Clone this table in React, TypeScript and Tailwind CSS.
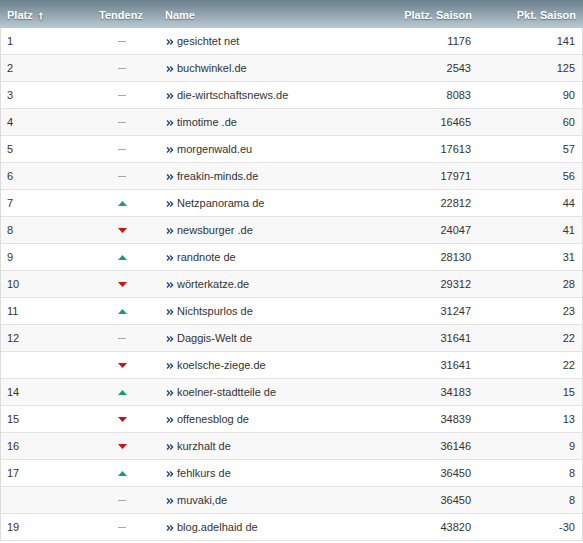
import React from "react";

type Row = {
  platz: string;
  trend: "none" | "up" | "down";
  name: string;
  saison: number;
  punkte: number;
};

const rows: Row[] = [
  { platz: "1", trend: "none", name: "gesichtet net", saison: 1176, punkte: 141 },
  { platz: "2", trend: "none", name: "buchwinkel.de", saison: 2543, punkte: 125 },
  { platz: "3", trend: "none", name: "die-wirtschaftsnews.de", saison: 8083, punkte: 90 },
  { platz: "4", trend: "none", name: "timotime .de", saison: 16465, punkte: 60 },
  { platz: "5", trend: "none", name: "morgenwald.eu", saison: 17613, punkte: 57 },
  { platz: "6", trend: "none", name: "freakin-minds.de", saison: 17971, punkte: 56 },
  { platz: "7", trend: "up", name: "Netzpanorama de", saison: 22812, punkte: 44 },
  { platz: "8", trend: "down", name: "newsburger .de", saison: 24047, punkte: 41 },
  { platz: "9", trend: "up", name: "randnote de", saison: 28130, punkte: 31 },
  { platz: "10", trend: "down", name: "wörterkatze.de", saison: 29312, punkte: 28 },
  { platz: "11", trend: "up", name: "Nichtspurlos de", saison: 31247, punkte: 23 },
  { platz: "12", trend: "none", name: "Daggis-Welt de", saison: 31641, punkte: 22 },
  { platz: "", trend: "down", name: "koelsche-ziege.de", saison: 31641, punkte: 22 },
  { platz: "14", trend: "up", name: "koelner-stadtteile de", saison: 34183, punkte: 15 },
  { platz: "15", trend: "down", name: "offenesblog de", saison: 34839, punkte: 13 },
  { platz: "16", trend: "down", name: "kurzhalt de", saison: 36146, punkte: 9 },
  { platz: "17", trend: "up", name: "fehlkurs de", saison: 36450, punkte: 8 },
  { platz: "", trend: "none", name: "muvaki,de", saison: 36450, punkte: 8 },
  { platz: "19", trend: "none", name: "blog.adelhaid de", saison: 43820, punkte: -30 },
];

const cols = "grid grid-cols-[80px_82px_1fr_98px_104px]";

const Trend = ({ t }: { t: Row["trend"] }) => {
  if (t === "up")
    return (
      <svg width="9" height="5" viewBox="0 0 9 5">
        <path d="M0 5 L4.5 0 L9 5 Z" fill="#1e9a6c" />
      </svg>
    );
  if (t === "down")
    return (
      <svg width="9" height="5" viewBox="0 0 9 5">
        <path d="M0 0 L9 0 L4.5 5 Z" fill="#cc1111" />
      </svg>
    );
  return <span className="block w-[8px] h-px bg-[#a8a8a8]" />;
};

const Chevrons = () => (
  <svg width="8" height="8" viewBox="0 0 8 8" className="mr-[3px] mt-[2px] shrink-0">
    <path d="M1 1.5 L3.4 4 L1 6.5" stroke="#1d4a72" strokeWidth="1.4" fill="none" />
    <path d="M4.2 1.5 L6.6 4 L4.2 6.5" stroke="#1d4a72" strokeWidth="1.4" fill="none" />
  </svg>
);

export default function App() {
  return (
    <div className="w-[583px] bg-white text-[11px] text-[#333] font-['Liberation_Sans',Arial,sans-serif]">
      <div
        className={`${cols} h-[28px] pt-[3px] items-center font-bold text-[11px] text-white bg-gradient-to-b from-[#6b808d] to-[#b9cad2] [text-shadow:0_1px_1px_rgba(0,0,0,0.35)]`}
      >
        <div className="pl-[7px] flex items-center gap-[5px]">
          Platz
          <svg width="6" height="8" viewBox="0 0 6 8" className="drop-shadow-[0_1px_1px_rgba(0,0,0,0.4)]">
            <path d="M3 0 L5.5 3 L3.8 3 L3.8 7.5 L2.2 7.5 L2.2 3 L0.5 3 Z" fill="#eef2f4" />
          </svg>
        </div>
        <div className="text-center">Tendenz</div>
        <div className="pl-[3px]">Name</div>
        <div className="text-right pr-[7px]">Platz. Saison</div>
        <div className="text-right pr-[7px]">Pkt. Saison</div>
      </div>
      <div className="border-x border-[#dcdcdc]">
        {rows.map((r, i) => (
          <div
            key={i}
            className={`${cols} h-[27px] items-center border-b border-[#e3e3e3] ${
              i % 2 === 1 ? "bg-[#f8f8f8]" : "bg-white"
            }`}
          >
            <div className="pl-[6px]">{r.platz}</div>
            <div className="flex justify-center">
              <Trend t={r.trend} />
            </div>
            <div className="pl-[3px] flex items-center">
              <Chevrons />
              {r.name}
            </div>
            <div className="text-right pr-[7px]">{r.saison}</div>
            <div className="text-right pr-[7px]">{r.punkte}</div>
          </div>
        ))}
      </div>
    </div>
  );
}
